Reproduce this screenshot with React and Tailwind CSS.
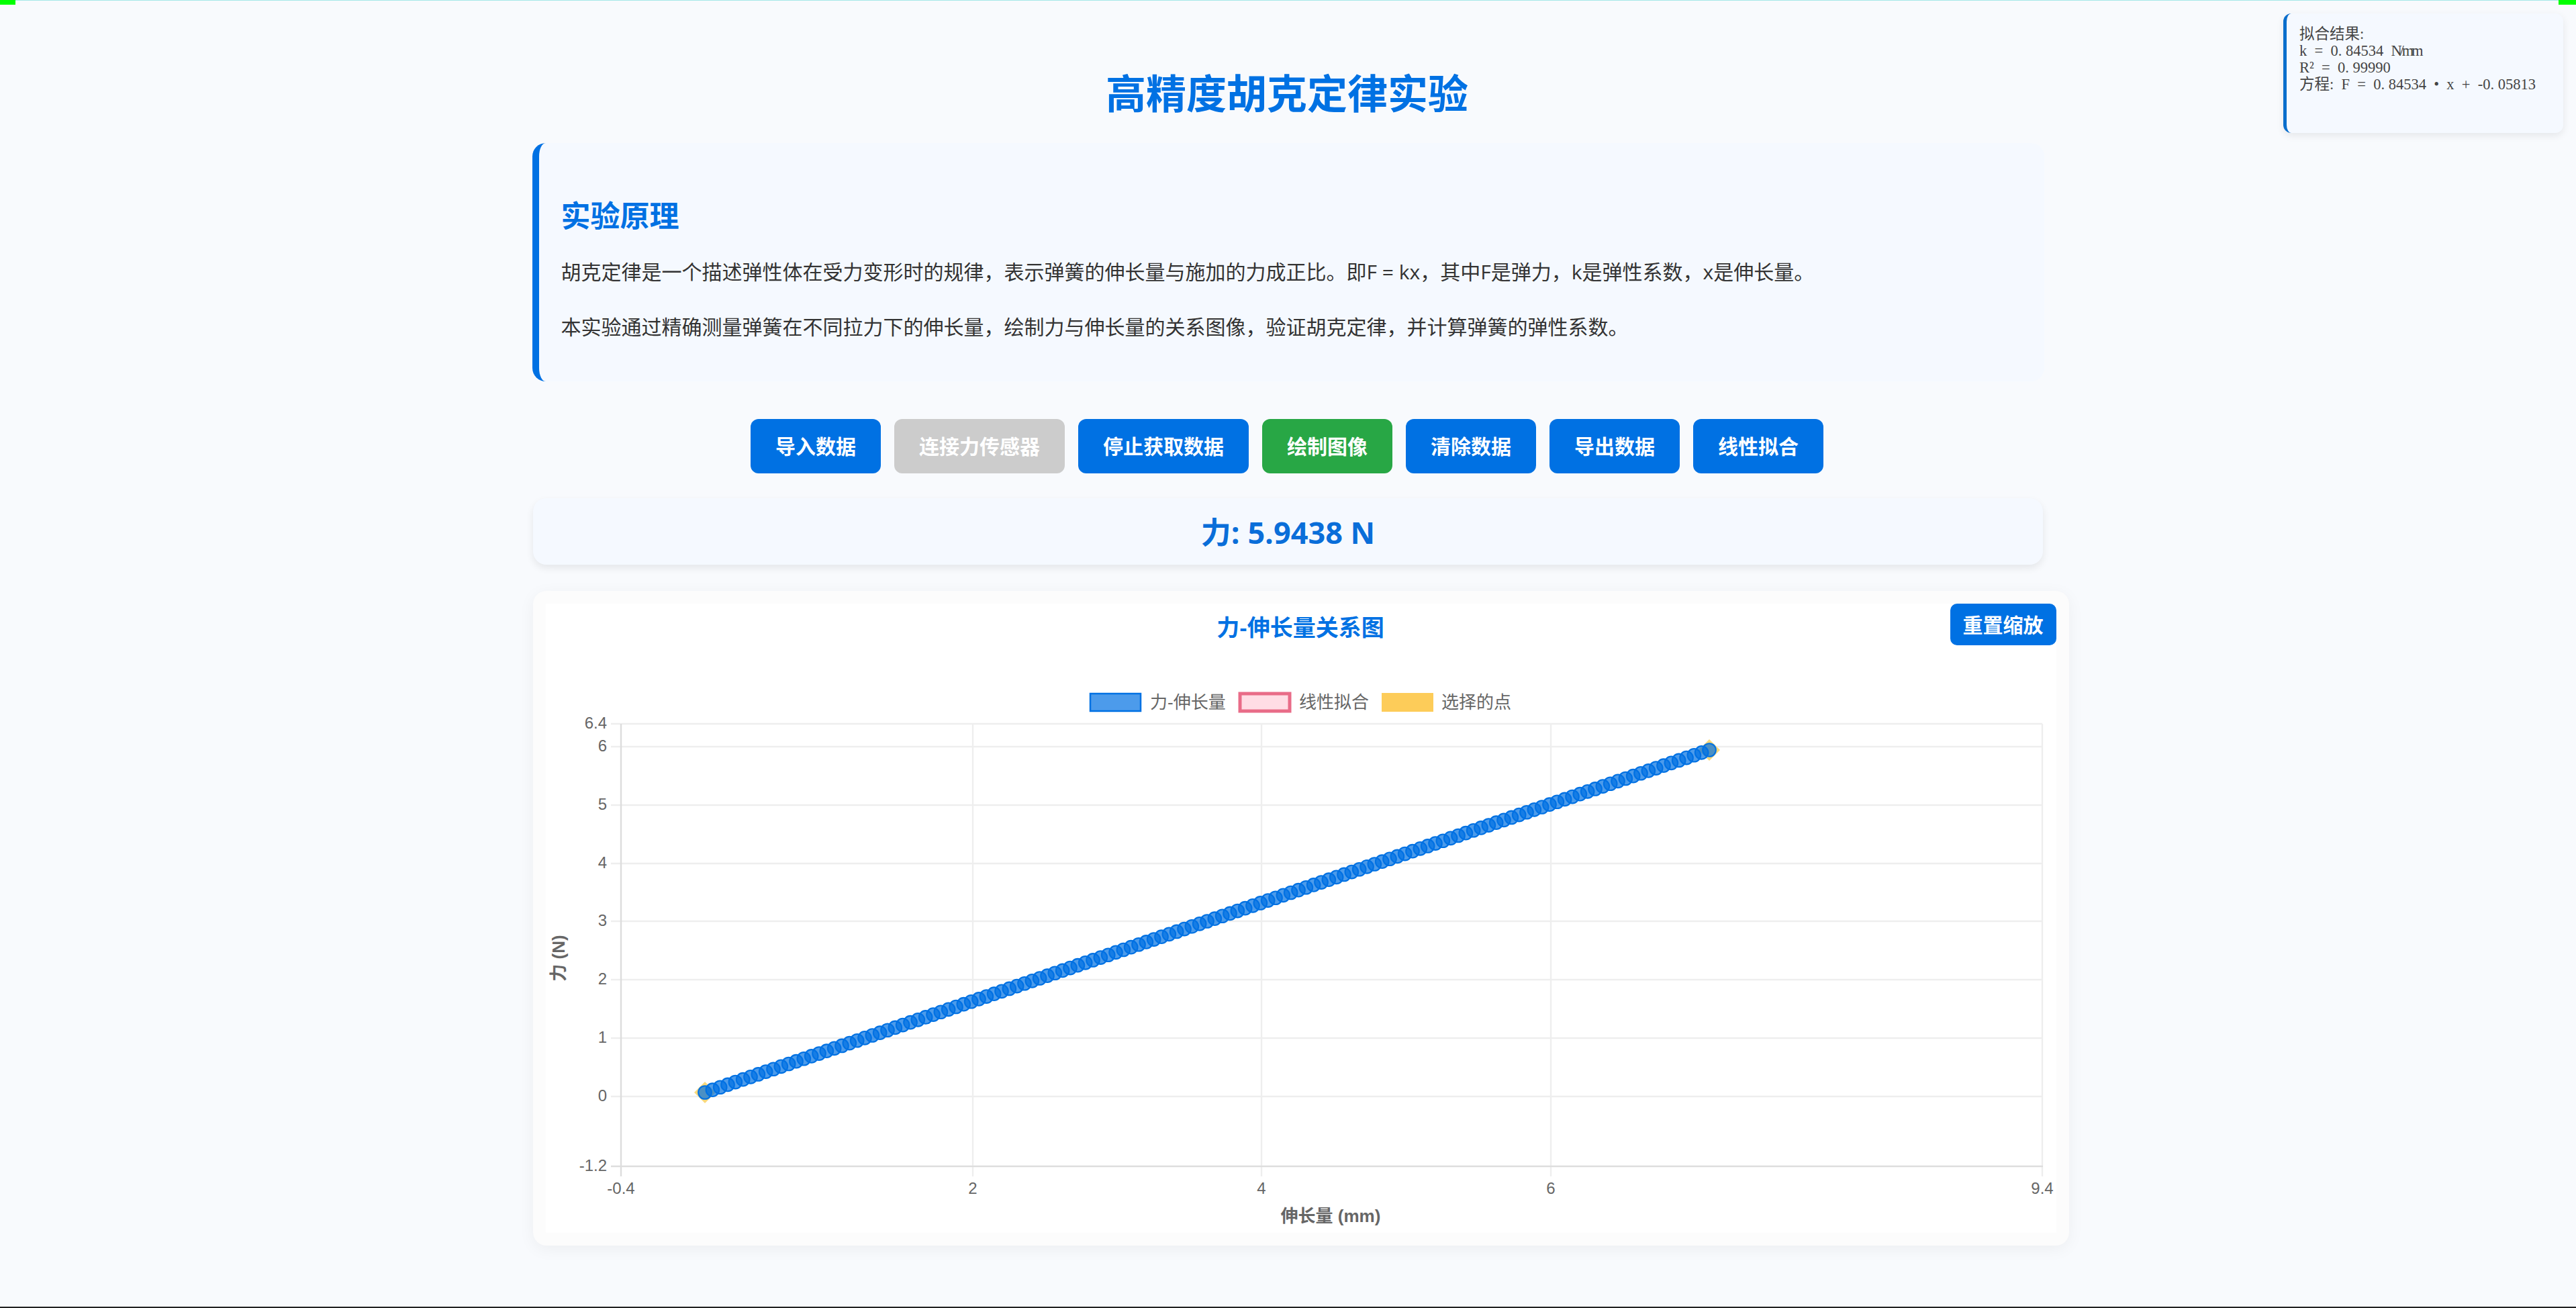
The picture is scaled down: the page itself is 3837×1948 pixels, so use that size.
const blue = "#0071e3";
const points = Array.from({ length: 133 }, (_, i) => ({
  x: 1049 + (i * (2545 - 1049)) / 132,
  y: 1627 + (i * (1117 - 1627)) / 132,
}));
const hLines = [
  { y: 1078, label: "6.4" },
  { y: 1112, label: "6" },
  { y: 1199, label: "5" },
  { y: 1286, label: "4" },
  { y: 1372, label: "3" },
  { y: 1459, label: "2" },
  { y: 1546, label: "1" },
  { y: 1633, label: "0" },
];
const vLines = [
  { x: 1448, label: "2" },
  { x: 1878, label: "4" },
  { x: 2309, label: "6" },
  { x: 3041, label: "9.4" },
];
const sans = "'Liberation Sans','Noto Sans CJK SC',sans-serif";

function Btn({ children, className = "bg-[#0071e3]" }) {
  return (
    <button className={`h-[81px] px-[37px] rounded-[12px] text-white text-[30px] font-semibold ${className}`}>
      {children}
    </button>
  );
}

function Dot() {
  return <span className="tracking-[0.25em]">.</span>;
}

function Chart() {
  return (
    <svg viewBox="812 899 2250 937" className="block w-full h-full">
      <text x="1936" y="947" textAnchor="middle" fontSize="34" fontWeight="700" fill={blue} fontFamily={sans}>力-伸长量关系图</text>

      <rect x="1623" y="1033" width="75" height="26" fill="rgba(0,113,227,0.7)" stroke={blue} strokeWidth="2.5" />
      <text x="1712" y="1055" fontSize="26" fill="#666" fontFamily={sans}>力-伸长量</text>
      <rect x="1846" y="1033" width="74" height="26" fill="#ffdde5" stroke="#e96c88" strokeWidth="5" />
      <text x="1934" y="1055" fontSize="26" fill="#666" fontFamily={sans}>线性拟合</text>
      <rect x="2057" y="1032" width="77" height="28" fill="#fdcc59" />
      <text x="2146" y="1055" fontSize="26" fill="#666" fontFamily={sans}>选择的点</text>

      {hLines.map((l) => (
        <g key={l.label}>
          <line x1="909" x2="3041" y1={l.y} y2={l.y} stroke="#eee" strokeWidth="2.4" />
          <text x="903" y={l.y + 7} textAnchor="end" fontSize="24" fill="#666" fontFamily={sans}>{l.label}</text>
        </g>
      ))}
      {vLines.map((l) => (
        <g key={l.label}>
          <line x1={l.x} x2={l.x} y1="1078" y2="1752" stroke="#eee" strokeWidth="2.4" />
          <text x={l.x} y="1778" textAnchor="middle" fontSize="24" fill="#666" fontFamily={sans}>{l.label}</text>
        </g>
      ))}
      <line x1="924" x2="924" y1="1078" y2="1752" stroke="#ddd" strokeWidth="2.4" />
      <line x1="909" x2="3042" y1="1737" y2="1737" stroke="#ddd" strokeWidth="2.4" />
      <text x="903" y="1744" textAnchor="end" fontSize="24" fill="#666" fontFamily={sans}>-1.2</text>
      <text x="924" y="1778" textAnchor="middle" fontSize="24" fill="#666" fontFamily={sans}>-0.4</text>

      <text x="1981" y="1820" textAnchor="middle" fontSize="26" fontWeight="700" fill="#666" fontFamily={sans}>伸长量 (mm)</text>
      <text transform="translate(840 1427) rotate(-90)" textAnchor="middle" fontSize="26" fontWeight="700" fill="#666" fontFamily={sans}>力 (N)</text>

      <polygon points="1049,1611 1065,1627 1049,1643 1033,1627" fill="#fad97c" />
      <polygon points="2545,1101 2561,1117 2545,1133 2529,1117" fill="#fad97c" />
      {points.map((p, i) => (
        <circle key={i} cx={p.x} cy={p.y} r="9.8" fill="rgba(0,113,227,0.7)" stroke={blue} strokeWidth="2.1" />
      ))}
    </svg>
  );
}

export default function App() {
  return (
    <div className="relative w-full h-[1948px] overflow-hidden flex flex-col items-center bg-[#f8fafd] font-['Open_Sans','Noto_Sans_CJK_SC',sans-serif]">
      <div className="h-px w-full bg-[#a5e8e8]" />
      <div className="absolute left-0 top-0 w-[23px] h-[7px] bg-[#00ff00]" />
      <div className="absolute right-0 top-0 w-[26px] h-[7px] bg-[#00ff00]" />

      <aside className="absolute top-[20px] right-[19px] w-[417px] h-[178px] pl-[19px] pt-[18px] border-l-[5px] border-[#0a6ecc] rounded-[12px] bg-[#f5f9ff] shadow-[0_4px_12px_rgba(0,0,0,0.08)] text-[22.5px] leading-[25px] text-[#444] font-['Liberation_Serif','Noto_Sans_CJK_SC',serif] [word-spacing:0.25em] whitespace-pre">
        <div>拟合结果:</div>
        <div>k = 0<Dot />84534 <span className="tracking-[-0.14em]">N/mm</span></div>
        <div>R² = 0<Dot />99990</div>
        <div>方程: F = 0<Dot />84534 • x + -0<Dot />05813</div>
      </aside>

      <h1 className="mt-[98px] mr-[3px] h-[80px] leading-[80px] text-[60px] font-bold text-[#0071e3]">高精度胡克定律实验</h1>

      <section className="mt-[34px] w-[2252px] h-[355px] pl-[33px] pt-[78px] border-l-[10px] border-[#0071e3] rounded-[20px] bg-[#f5f9ff]">
        <h2 className="h-[60px] leading-[60px] text-[44px] font-bold text-[#0071e3]">实验原理</h2>
        <p className="mt-[32px] h-[44px] leading-[44px] text-[30px] text-[#333]">胡克定律是一个描述弹性体在受力变形时的规律，表示弹簧的伸长量与施加的力成正比。即F = kx，其中F是弹力，k是弹性系数，x是伸长量。</p>
        <p className="mt-[38px] h-[44px] leading-[44px] text-[30px] text-[#333]">本实验通过精确测量弹簧在不同拉力下的伸长量，绘制力与伸长量的关系图像，验证胡克定律，并计算弹簧的弹性系数。</p>
      </section>

      <div className="mt-[56px] mr-[3px] flex justify-center gap-[20px]">
        <Btn>导入数据</Btn>
        <Btn className="bg-[#cccccc]">连接力传感器</Btn>
        <Btn>停止获取数据</Btn>
        <Btn className="bg-[#28a745]">绘制图像</Btn>
        <Btn>清除数据</Btn>
        <Btn>导出数据</Btn>
        <Btn>线性拟合</Btn>
      </div>

      <div className="mt-[37px] w-[2249px] h-[99px] pt-[3px] flex items-center justify-center rounded-[20px] bg-[#f5f9ff] shadow-[0_5px_12px_rgba(0,0,0,0.08)] text-[45px] font-bold text-[#0a6ed9]">
        力: 5.9438 N
      </div>

      <div className="mt-[39px] ml-[38px] shrink-0 w-[2288px] h-[975px] p-[19px] rounded-[20px] bg-[#fcfcfc] shadow-[0_5px_25px_rgba(0,0,0,0.05)]">
        <div className="relative w-[2250px] h-[937px] bg-white">
          <Chart />
          <button className="absolute top-0 right-0 w-[158px] h-[62px] rounded-[10px] bg-[#0071e3] text-white text-[30px] font-semibold">重置缩放</button>
        </div>
      </div>

      <div className="absolute bottom-0 left-0 right-0 h-[2px] bg-[#222]" />
    </div>
  );
}
